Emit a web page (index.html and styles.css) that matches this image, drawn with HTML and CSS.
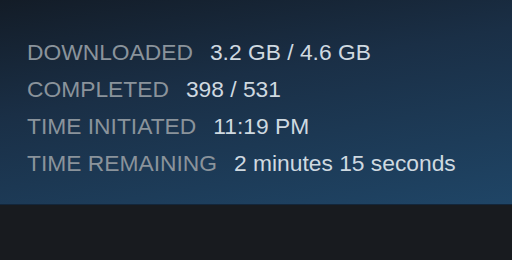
FILE: index.html
```html
<!DOCTYPE html>
<html>
<head>
<meta charset="utf-8">
<link rel="stylesheet" href="styles.css">
</head>
<body>
<div class="panel">
  <div class="stats">
    <div class="row"><span class="label">DOWNLOADED</span><span class="value">3.2 GB / 4.6 GB</span></div>
    <div class="row"><span class="label">COMPLETED</span><span class="value">398 / 531</span></div>
    <div class="row"><span class="label">TIME INITIATED</span><span class="value">11:19 PM</span></div>
    <div class="row"><span class="label">TIME REMAINING</span><span class="value">2 minutes 15 seconds</span></div>
  </div>
</div>
<div class="footer"></div>
</body>
</html>
```
FILE: styles.css
```css
html, body {
  margin: 0;
  padding: 0;
  width: 512px;
  height: 260px;
  overflow: hidden;
  background: #181b1f;
  font-family: "Liberation Sans", Arial, sans-serif;
}
.panel {
  height: 205px;
  background: linear-gradient(170deg, #131c27 0%, #1a2f46 40%, #1f4566 100%);
  border-bottom: 1px solid #13263a;
  box-sizing: border-box;
  padding: 40px 0 0 27px;
}
.stats {
  display: flex;
  flex-direction: column;
  gap: 12px;
}
.row {
  display: flex;
  gap: 13px;
  font-size: 22.8px;
  line-height: 25px;
  white-space: nowrap;
}
.label {
  color: #8a939b;
}
.value {
  color: #cfd9e0;
  padding-left: 4px;
}
.footer {
  height: 55px;
}
```
